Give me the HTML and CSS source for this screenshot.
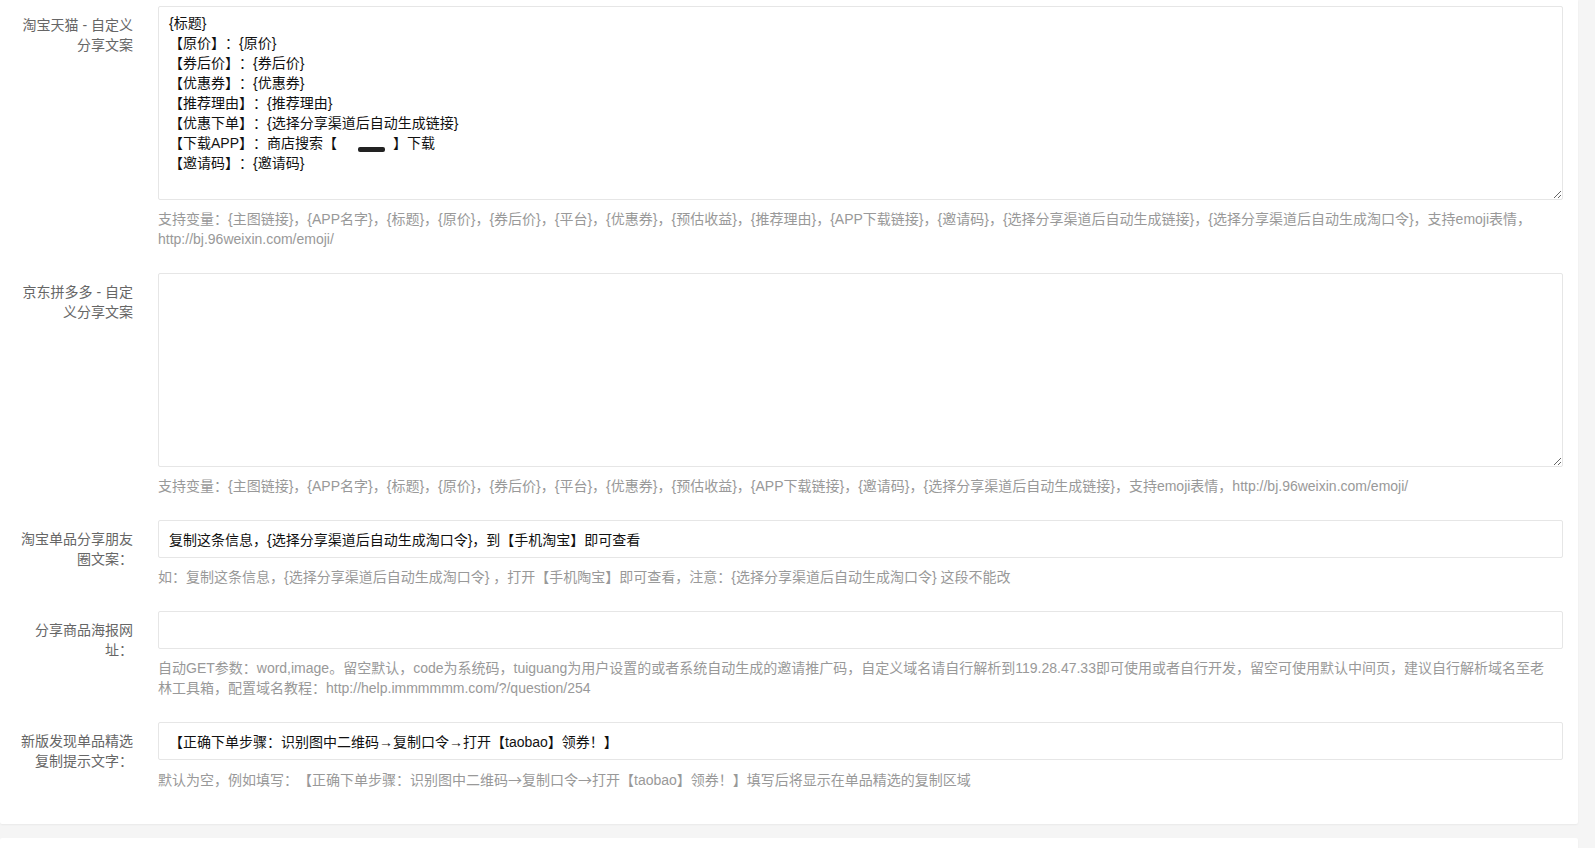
FILE: index.html
```html
<!DOCTYPE html>
<html lang="zh-CN">
<head>
    <meta charset="UTF-8">
    <meta name="viewport" content="width=device-width, initial-scale=1.0">
    <title>分享文案设置</title>
    <link rel="stylesheet" href="styles.css">
</head>
<body>

    <div class="page">
        <div class="panel">
            <form class="settings-form">
                <!-- 淘宝天猫 -->
                <div class="form-item">
                    <label class="form-label" for="tbText">淘宝天猫 - 自定义分享文案</label>
                    <div class="input-block">
                        <div class="textarea-wrap">
<textarea class="textarea" id="tbText" name="tb_text">{标题}
【原价】：{原价}
【券后价】：{券后价}
【优惠券】：{优惠券}
【推荐理由】：{推荐理由}
【优惠下单】：{选择分享渠道后自动生成链接}
【下载APP】：商店搜索【　　　　】下载
【邀请码】：{邀请码}</textarea>
                            <span class="redact"></span>
                        </div>
                        <div class="word-aux">支持变量：{主图链接}，{APP名字}，{标题}，{原价}，{券后价}，{平台}，{优惠券}，{预估收益}，{推荐理由}，{APP下载链接}，{邀请码}，{选择分享渠道后自动生成链接}，{选择分享渠道后自动生成淘口令}，支持emoji表情，<br>http://bj.96weixin.com/emoji/</div>
                    </div>
                </div>

                <!-- 京东拼多多 -->
                <div class="form-item">
                    <label class="form-label" for="jdText">京东拼多多 - 自定义分享文案</label>
                    <div class="input-block">
                        <textarea class="textarea" id="jdText" name="jd_text"></textarea>
                        <div class="word-aux">支持变量：{主图链接}，{APP名字}，{标题}，{原价}，{券后价}，{平台}，{优惠券}，{预估收益}，{APP下载链接}，{邀请码}，{选择分享渠道后自动生成链接}，支持emoji表情，http://bj.96weixin.com/emoji/</div>
                    </div>
                </div>

                <!-- 朋友圈文案 -->
                <div class="form-item">
                    <label class="form-label" for="momentText">淘宝单品分享朋友圈文案：</label>
                    <div class="input-block">
                        <input class="input" type="text" id="momentText" name="moment_text" value="复制这条信息，{选择分享渠道后自动生成淘口令}，到【手机淘宝】即可查看">
                        <div class="word-aux">如：复制这条信息，{选择分享渠道后自动生成淘口令}&nbsp;，打开【手机陶宝】即可查看，注意：{选择分享渠道后自动生成淘口令} 这段不能改</div>
                    </div>
                </div>

                <!-- 海报网址 -->
                <div class="form-item">
                    <label class="form-label" for="posterUrl">分享商品海报网址：</label>
                    <div class="input-block">
                        <input class="input" type="text" id="posterUrl" name="poster_url">
                        <div class="word-aux word-aux-wrap">自动GET参数：word,image。留空默认，code为系统码，tuiguang为用户设置的或者系统自动生成的邀请推广码，自定义域名请自行解析到119.28.47.33即可使用或者自行开发，留空可使用默认中间页，建议自行解析域名至老林工具箱，配置域名教程：http://help.immmmmm.com/?/question/254</div>
                    </div>
                </div>

                <!-- 复制提示 -->
                <div class="form-item">
                    <label class="form-label" for="copyTip">新版发现单品精选复制提示文字：</label>
                    <div class="input-block">
                        <input class="input input-cjk" type="text" id="copyTip" name="copy_tip" value="【正确下单步骤：识别图中二维码→复制口令→打开【taobao】领券！】">
                        <div class="word-aux">默认为空，例如填写：【正确下单步骤：识别图中二维码<span class="cjk">→</span>复制口令<span class="cjk">→</span>打开【taobao】领券！】填写后将显示在单品精选的复制区域</div>
                    </div>
                </div>
            </form>
        </div>

        <div class="panel panel-next"></div>
    </div>

</body>
</html>
```

FILE: styles.css
```css
body {
    margin: 0;
    background-color: #f5f5f5;
    font-family: "Liberation Sans", "Noto Sans CJK SC", sans-serif;
    font-size: 14px;
    color: #333;
    text-spacing-trim: space-all;
}
.page {
    padding-right: 17px;
}
.panel {
    background-color: #fff;
    border-radius: 0 0 2px 2px;
    box-shadow: 0 1px 2px rgba(0, 0, 0, 0.05);
    padding: 6px 15px 10px 0;
}
.panel-next {
    margin-top: 14px;
    height: 40px;
    padding: 0;
    border-radius: 2px;
}
.form-item {
    display: grid;
    grid-template-columns: 148px 1fr;
    column-gap: 10px;
    margin-bottom: 15px;
}
.form-label {
    padding: 9px 15px;
    line-height: 20px;
    text-align: right;
    color: #666;
}
.input, .textarea {
    display: block;
    width: 100%;
    box-sizing: border-box;
    margin: 0;
    border: 1px solid #e6e6e6;
    border-radius: 2px;
    background-color: #fff;
    font: inherit;
    color: #111;
    outline: none;
    text-spacing-trim: space-all;
}
.input {
    height: 38px;
    padding: 0 10px;
}
.textarea {
    height: 194px;
    padding: 6px 10px;
    line-height: 20px;
    resize: vertical;
}
.textarea-wrap {
    position: relative;
}
.redact {
    position: absolute;
    left: 200px;
    top: 141px;
    width: 27px;
    height: 5px;
    border-radius: 2px;
    background-color: #222;
}
.word-aux {
    padding: 9px 0;
    line-height: 20px;
    color: #999;
}
.word-aux-wrap {
    padding-right: 8px;
}
.cjk {
    font-family: "Noto Sans CJK SC", sans-serif;
}
```
